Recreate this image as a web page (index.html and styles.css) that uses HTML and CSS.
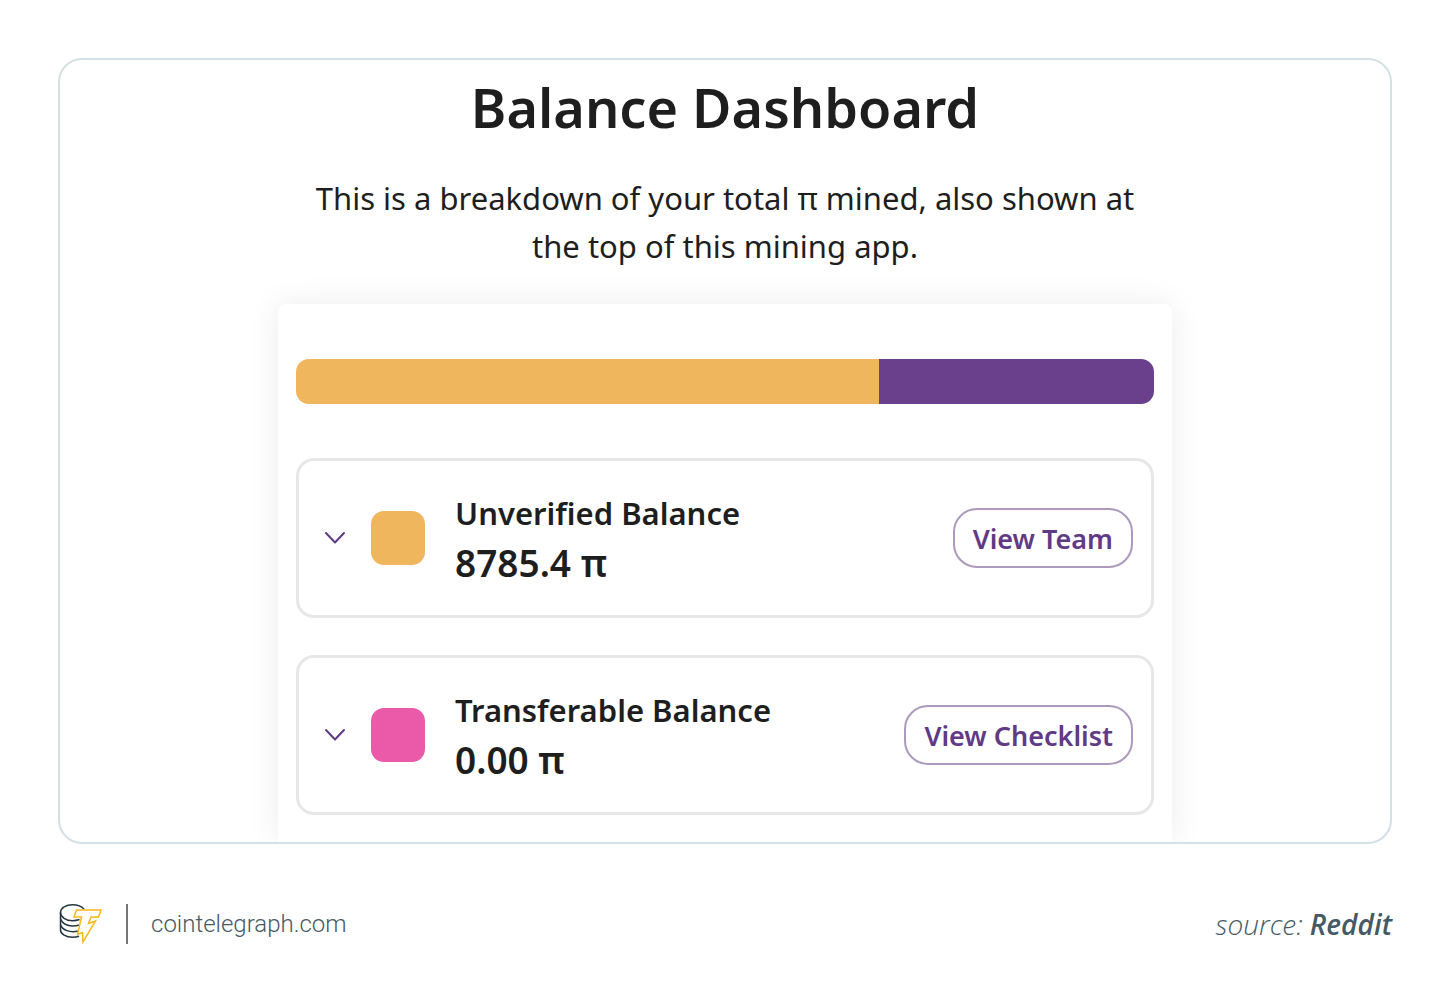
FILE: index.html
```
<!DOCTYPE html>
<html lang="en">
    <head>
        <meta charset="utf-8">
        <meta name="viewport" content="width=device-width, initial-scale=1">
        <title>Balance Dashboard</title>
        <link rel="stylesheet" href="styles.css">
    </head>
    <body>
        <main class="frame">
            <h1>Balance Dashboard</h1>
            <p class="intro">This is a breakdown of your total π mined, also shown at the top of this mining app.</p>

            <section class="panel">
                <div class="bar">
                    <div class="bar-part unverified" style="width: 68%"></div>
                    <div class="bar-part locked" style="width: 32%"></div>
                </div>

                <div class="balance">
                    <button class="toggle" type="button" aria-label="Show unverified balance details">
                        <svg width="22" height="14" viewBox="0 0 22 14"><path d="M2 2l9 9.500l9-9.500"/></svg>
                    </button>
                    <span class="swatch unverified"></span>
                    <div class="balance-text">
                        <h2>Unverified Balance</h2>
                        <p class="amount">8785.4 π</p>
                    </div>
                    <button class="action" type="button">View Team</button>
                </div>

                <div class="balance">
                    <button class="toggle" type="button" aria-label="Show transferable balance details">
                        <svg width="22" height="14" viewBox="0 0 22 14"><path d="M2 2l9 9.500l9-9.500"/></svg>
                    </button>
                    <span class="swatch transferable"></span>
                    <div class="balance-text">
                        <h2>Transferable Balance</h2>
                        <p class="amount">0.00 π</p>
                    </div>
                    <button class="action" type="button">View Checklist</button>
                </div>
            </section>
        </main>

        <footer class="footer">
            <a class="site" href="#">
                <svg class="logo" width="44" height="42" viewBox="0 0 44 42">
                    <!-- stack of coins -->
                    <g class="coins">
                        <path d="M26 6C23.500 3.200 19.500 1.700 14.500 1.700C8 1.700 2.500 5 2.500 9.500S8 17.700 14.500 17.700C17 17.700 19.500 17.200 21.500 16.500"/>
                        <path d="M2.500 9.500V27C2.500 31 8 34.300 14.500 34.300C17 34.300 19 34 21 33.300"/>
                        <path d="M2.500 15.500C4 21.500 12 24.700 21.500 22"/>
                        <path d="M2.500 21.500C4 27 12 30.200 20.500 28"/>
                    </g>
                    <!-- bolt -->
                    <path class="bolt" d="M18.500 7H43L40.500 14H33L30.500 20.500L37.500 18L25 39L24.500 29.500L19.500 31.500L23.500 14H16Z"/>
                </svg>
                <span class="site-name">cointelegraph.com</span>
            </a>
            <p class="source">source: <a href="#">Reddit</a></p>
        </footer>
    </body>
</html>
```

FILE: styles.css
```
* {
    box-sizing: border-box;
}
body {
    margin: 0;
    padding: 58px;
    background: #fff;
    color: #1e1e1e;
    font-family: "Noto Sans", "Open Sans", sans-serif;
}
h1, h2, p {
    margin: 0;
}
.frame {
    padding: 15px 24px 0;
    border: 2px solid #d3e0e5;
    border-radius: 24px;
    overflow: hidden; /* cuts the panel shadow at the frame */
    text-align: center;
}
h1 {
    font-size: 54px;
    font-weight: 600;
    line-height: 64px;
}
.intro {
    max-width: 860px;
    margin: 35px auto 34px;
    font-size: 31px;
    line-height: 48px;
}
.panel {
    display: flex;
    flex-direction: column;
    gap: 37px;
    max-width: 894px;
    margin: 0 auto;
    padding: 55px 18px 27px;
    border-radius: 8px 8px 0 0;
    box-shadow: 0 0 32px rgba(0, 0, 0, 0.08);
    text-align: left;
}
.bar {
    display: flex;
    height: 45px;
    margin-bottom: 17px;
    border-radius: 13px;
    overflow: hidden;
}
.unverified {
    background: #efb65e;
}
.locked {
    background: #6a3f8b;
}
.transferable {
    background: #eb5aa9;
}
.balance {
    display: flex;
    align-items: center;
    min-height: 160px;
    padding: 0 18px 0 25px;
    border: 3px solid #e7e7e7;
    border-radius: 18px;
}
.toggle {
    display: flex;
    margin-right: 25px;
    padding: 0;
    border: 0;
    background: none;
}
.toggle svg {
    fill: none;
    stroke: #5f3a85;
    stroke-width: 2;
    stroke-linecap: round;
    stroke-linejoin: round;
}
.swatch {
    width: 54px;
    height: 54px;
    border-radius: 13px;
}
.balance-text {
    flex: 1;
    margin-left: 30px;
}
h2 {
    font-size: 31px;
    font-weight: 600;
    line-height: 50px;
}
.amount {
    font-size: 37px;
    font-weight: 600;
    line-height: 50px;
}
.action {
    height: 60px;
    padding: 0 18px;
    border: 2px solid #ac9abd;
    border-radius: 24px;
    background: #fff;
    color: #613a85;
    font-family: inherit;
    font-size: 27px;
    font-weight: 600;
}
.footer {
    display: flex;
    align-items: center;
    justify-content: space-between;
    margin-top: 59px;
    color: #455a64;
}
.footer a {
    color: inherit;
    text-decoration: none;
}
.site {
    display: flex;
    align-items: center;
}
.logo {
    fill: none;
    stroke-linejoin: miter;
}
.coins {
    stroke: #263640;
    stroke-width: 1.5;
}
.bolt {
    stroke: #fbb71c;
    stroke-width: 1.5;
}
.site-name {
    margin-left: 24px;
    padding-left: 23px;
    border-left: 2px solid #777;
    font-family: Roboto, sans-serif;
    font-size: 24px;
    font-weight: 300;
    line-height: 40px;
}
.source {
    font-family: "Open Sans", sans-serif;
    font-size: 28px;
    font-style: italic;
    font-weight: 300;
    line-height: 40px;
}
.source a {
    font-weight: 600;
}
```
